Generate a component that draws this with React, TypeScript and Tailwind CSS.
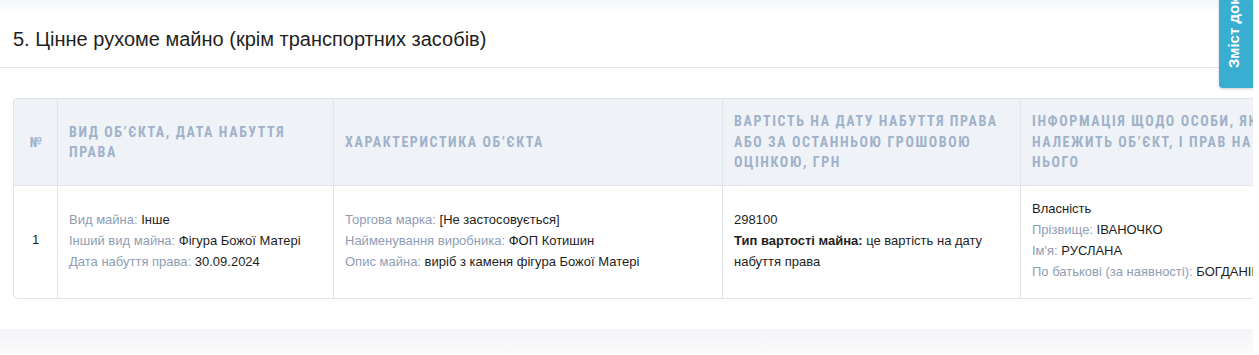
import React from "react";

type Field = { label: string; value: string };

const headers = [
  "№",
  "Вид об’єкта, дата набуття права",
  "Характеристика об’єкта",
  "Вартість на дату набуття права або за останньою грошовою оцінкою, грн",
  "Інформація щодо особи, якій належить об’єкт, і прав на нього",
];

const objectInfo: Field[] = [
  { label: "Вид майна:", value: "Інше" },
  { label: "Інший вид майна:", value: "Фігура Божої Матері" },
  { label: "Дата набуття права:", value: "30.09.2024" },
];

const features: Field[] = [
  { label: "Торгова марка:", value: "[Не застосовується]" },
  { label: "Найменування виробника:", value: "ФОП Котишин" },
  { label: "Опис майна:", value: "виріб з каменя фігура Божої Матері" },
];

const owner: Field[] = [
  { label: "Прізвище:", value: "ІВАНОЧКО" },
  { label: "Ім'я:", value: "РУСЛАНА" },
  { label: "По батькові (за наявності):", value: "БОГДАНІВНА" },
];

const FieldList = ({ items }: { items: Field[] }) => (
  <div className="flex flex-col">
    {items.map((f) => (
      <p key={f.label} className="leading-[21px] whitespace-nowrap">
        <span className="text-[#8e9db5]">{f.label}</span>{" "}
        <span className="text-[#1e1e1e]">{f.value}</span>
      </p>
    ))}
  </div>
);

const App = () => {
  return (
    <div className="relative w-[1259px] h-[355px] overflow-hidden bg-white font-['Liberation_Sans',Arial,sans-serif]">
      <div className="flex">
        <div className="w-[1253px] overflow-hidden">
          <div className="h-[9px] bg-gradient-to-b from-[#f4f6f9] to-[#fafbfc]" />
          <div className="bg-white">
            <div className="h-[59px] flex items-center pt-[2px] px-[13px] border-b border-[#e4e7eb]">
              <h2 className="text-[20px] text-[#1f1f1f]">
                5. Цінне рухоме майно (крім транспортних засобів)
              </h2>
            </div>
            <div className="pt-[30px] pb-[30px] pl-[13px]">
              <div className="w-[1400px] border border-[#dfe5eb] rounded-[4px] overflow-hidden text-[13px]">
                <div className="grid grid-cols-[43px_276px_389px_298px_394px] bg-[#eff3f7] border-b border-[#dfe5eb] h-[87px] font-['Liberation_Sans_Narrow','Roboto_Condensed',sans-serif] font-bold uppercase text-[#a0b1ca] text-[14px] tracking-[1.6px] leading-[20.5px]">
                  {headers.map((h, i) => (
                    <div
                      key={h}
                      className={`flex items-center ${i === 0 ? "justify-center normal-case tracking-normal" : "px-[11px] border-l border-[#dfe5eb]"}`}
                    >
                      <span className={i === 4 ? "w-[250px]" : ""}>{h}</span>
                    </div>
                  ))}
                </div>
                <div className="grid grid-cols-[43px_276px_389px_298px_394px] h-[112px] [&>div]:pb-[4px]">
                  <div className="flex items-center justify-center text-[#1e1e1e]">1</div>
                  <div className="flex items-center px-[11px] border-l border-[#dfe5eb]">
                    <FieldList items={objectInfo} />
                  </div>
                  <div className="flex items-center px-[11px] border-l border-[#dfe5eb]">
                    <FieldList items={features} />
                  </div>
                  <div className="flex items-center px-[11px] border-l border-[#dfe5eb] text-[#1e1e1e] leading-[21px]">
                    <div>
                      <p>298100</p>
                      <p className="w-[262px]">
                        <b>Тип вартості майна:</b> це вартість на дату набуття права
                      </p>
                    </div>
                  </div>
                  <div className="flex items-center px-[11px] border-l border-[#dfe5eb]">
                    <div>
                      <p className="leading-[21px] text-[#1e1e1e]">Власність</p>
                      <FieldList items={owner} />
                    </div>
                  </div>
                </div>
              </div>
            </div>
          </div>
          <div className="h-[25px] bg-gradient-to-b from-[#f3f4f8] to-[#fbfbfc]" />
        </div>
        <div className="w-[6px] bg-white" />
      </div>

      <div className="absolute top-0 right-[6px] w-[34px] h-[88px] bg-[#3aaed0] rounded-bl-[4px] shadow-[0_1px_3px_rgba(0,0,0,0.2)] flex flex-col items-center justify-end overflow-hidden pb-[20px]">
        <span className="shrink-0 mr-[5px] [writing-mode:vertical-rl] rotate-180 whitespace-nowrap text-white font-bold text-[15px] leading-none">
          Зміст документа
        </span>
      </div>
    </div>
  );
};

export default App;
